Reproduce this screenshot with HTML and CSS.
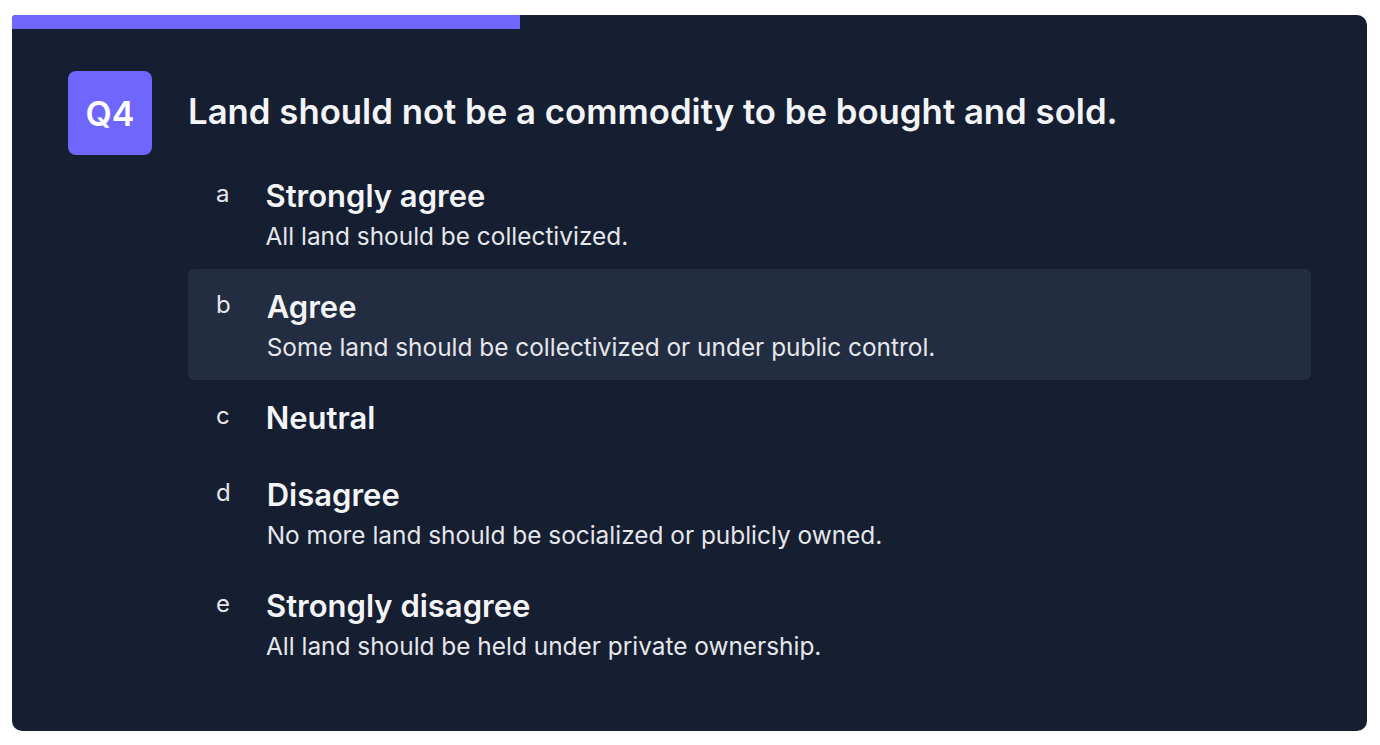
FILE: index.html
```html
<!DOCTYPE html>
<html lang="en">
<head>
<meta charset="utf-8">
<title>Q4</title>
<link rel="stylesheet" href="styles.css">
</head>
<body>
<div class="card">
  <div class="progress"><div class="progress-fill" style="width: 37.5%"></div></div>
  <div class="content">
    <div class="question">
      <div class="badge">Q4</div>
      <h1 class="question-text">Land should not be a commodity to be bought and sold.</h1>
    </div>
    <ul class="options">
      <li class="option">
        <span class="letter">a</span>
        <div class="body">
          <div class="title">Strongly agree</div>
          <div class="desc">All land should be collectivized.</div>
        </div>
      </li>
      <li class="option active">
        <span class="letter">b</span>
        <div class="body">
          <div class="title">Agree</div>
          <div class="desc">Some land should be collectivized or under public control.</div>
        </div>
      </li>
      <li class="option">
        <span class="letter">c</span>
        <div class="body">
          <div class="title">Neutral</div>
        </div>
      </li>
      <li class="option">
        <span class="letter">d</span>
        <div class="body">
          <div class="title">Disagree</div>
          <div class="desc">No more land should be socialized or publicly owned.</div>
        </div>
      </li>
      <li class="option">
        <span class="letter">e</span>
        <div class="body">
          <div class="title">Strongly disagree</div>
          <div class="desc">All land should be held under private ownership.</div>
        </div>
      </li>
    </ul>
  </div>
</div>
</body>
</html>
```

FILE: styles.css
```css
* { box-sizing: border-box; }
html, body { margin: 0; padding: 0; background: #ffffff; }
body {
  font-family: Inter, "Noto Sans", "Liberation Sans", sans-serif;
  padding: 15px 13px 14px 12px;
}
.card {
  background: #161e31;
  border-radius: 4px 10px 10px 10px;
  height: 716px;
  overflow: hidden;
  color: #f3f4f6;
}
.progress { height: 14px; }
.progress-fill { height: 100%; background: #6e66fd; }
.content { padding: 42px 56px 0 56px; }
.question {
  display: flex;
  align-items: center;
  gap: 36px;
}
.badge {
  width: 84px;
  height: 84px;
  flex: none;
  border-radius: 8px;
  background: #6e66fd;
  color: #ffffff;
  font-size: 34px;
  font-weight: 600;
  display: flex;
  align-items: center;
  justify-content: center;
}
.question-text {
  margin: 0;
  font-size: 34.75px;
  font-weight: 600;
  line-height: 40px;
  color: #f3f4f6;
  padding-bottom: 4px;
}
.options {
  list-style: none;
  margin: 3px 0 0 120px;
  padding: 0;
}
.option {
  display: flex;
  align-items: flex-start;
  gap: 36px;
  padding: 15px 28px 16px 28px;
  border-radius: 6px;
}
.option.active { background: #232d41; }
.letter {
  font-size: 24px;
  line-height: 42px;
  color: #e5e7eb;
}
.title {
  font-size: 31px;
  font-weight: 600;
  line-height: 46px;
  color: #f3f4f6;
}
.desc {
  font-size: 24.4px;
  line-height: 34px;
  color: #e5e7eb;
}
```
